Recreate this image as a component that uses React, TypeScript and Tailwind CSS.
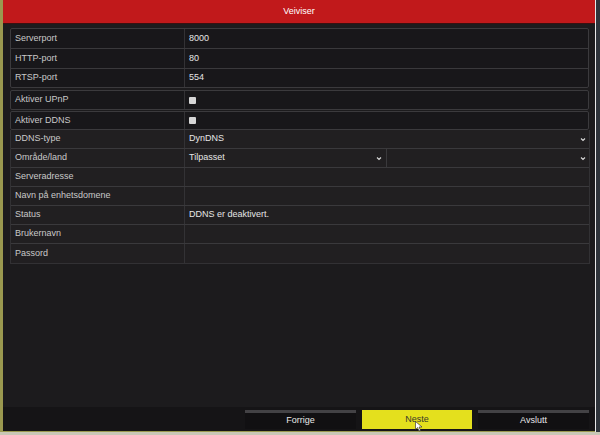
import React from "react";

const font = { fontFamily: '"Liberation Sans", Arial, sans-serif' };

function Chevron() {
  return (
    <svg width="6" height="5" viewBox="0 0 6 5" className="shrink-0">
      <path d="M1 1.5 L3 3.5 L5 1.5" stroke="#d8d8d8" strokeWidth="1.1" fill="none" />
    </svg>
  );
}

function Check() {
  return <div className="w-[7px] h-[7px] bg-[#d6d6d6] rounded-[1px]" />;
}

function Row({
  label,
  children,
  h = "h-[20px]",
  last = false,
}: {
  label: string;
  children?: React.ReactNode;
  h?: string;
  last?: boolean;
}) {
  return (
    <div className={`flex ${h} ${last ? "" : "border-b border-[#3a393c]"}`}>
      <div className="w-[174px] shrink-0 border-r border-[#333235] pl-[4px] flex items-center text-[#c9c9c9]">
        {label}
      </div>
      <div className="flex-1 flex items-center pl-[4px] pr-[3px] text-[#e6e6e6]">{children}</div>
    </div>
  );
}

function Select({ value }: { value?: string }) {
  return (
    <div className="flex-1 flex items-center justify-between h-full">
      <span>{value}</span>
      <Chevron />
    </div>
  );
}

export default function App() {
  const ddnsRows = [
    "Serveradresse",
    "Navn på enhetsdomene",
    "Status",
    "Brukernavn",
    "Passord",
  ];

  return (
    <div className="w-[600px] h-[435px] bg-[#b1af97] flex flex-col overflow-hidden text-[9px]" style={font}>
      <div className="flex h-[432px]">
        <div className="w-[595px] h-full bg-[#1c1b1d] border-l-[3px] border-b border-[#9a984f] flex flex-col">
          <div className="h-[24px] bg-[#c1191b] flex items-center justify-center text-white text-[9px] border-b border-[#3a1010]">
            Veiviser
          </div>

          <div className="flex-1 flex flex-col pl-[7px] pr-[6px] pt-[4px]">
            <div className="border border-[#3b3a3d] rounded-[2px] bg-[#18171a]">
              <Row label="Serverport">8000</Row>
              <Row label="HTTP-port">80</Row>
              <Row label="RTSP-port" h="h-[18px]" last>
                554
              </Row>
            </div>

            <div className="mt-[2px] border border-[#3b3a3d] rounded-[2px] bg-[#18171a]">
              <Row label="Aktiver UPnP" h="h-[18px]" last>
                <Check />
              </Row>
            </div>
            <div className="mt-[1px] border border-[#3b3a3d] rounded-[2px] bg-[#18171a]">
              <Row label="Aktiver DDNS" h="h-[17px]" last>
                <Check />
              </Row>
            </div>

            <div className="border border-t-0 border-[#323134] bg-[#211f21] mr-[-1px]">
              <Row label="DDNS-type" h="h-[19px]">
                <Select value="DynDNS" />
              </Row>
              <div className="flex h-[19px] border-b border-[#3a393c]">
                <div className="w-[174px] shrink-0 border-r border-[#333235] pl-[4px] flex items-center text-[#c9c9c9]">
                  Område/land
                </div>
                <div className="w-[202px] flex items-center pl-[4px] pr-[4px] border-r border-[#3a393c] text-[#e6e6e6]">
                  <Select value="Tilpasset" />
                </div>
                <div className="flex-1 flex items-center pl-[4px] pr-[3px]">
                  <Select />
                </div>
              </div>
              {ddnsRows.map((label, i) => (
                <Row key={label} label={label} h="h-[19px]" last={i === ddnsRows.length - 1}>
                  {label === "Status" ? "DDNS er deaktivert." : null}
                </Row>
              ))}
            </div>
          </div>

          <div className="relative h-[24px] bg-[#151416] flex items-start justify-end gap-[6px] pt-[3px] pr-[6px]">
            <div className="w-[111px] h-[19px] bg-[#111012] border-t-[3px] border-[#434245] flex items-center justify-center text-[#e8e8e8]">
              Forrige
            </div>
            <div className="w-[110px] h-[19px] bg-[#e4e01d] flex items-center justify-center text-[#3a3a2a]">
              Neste
            </div>
            <div className="w-[111px] h-[19px] bg-[#111012] border-t-[3px] border-[#434245] flex items-center justify-center text-[#e8e8e8]">
              Avslutt
            </div>
            <svg className="absolute left-[412px] top-[14px]" width="8" height="11" viewBox="0 0 8 11">
              <path d="M0.5 0.5 L0.5 8.5 L2.5 6.5 L4 10 L5.5 9.3 L4 6 L7 6 Z" fill="#ffffff" stroke="#222" strokeWidth="0.6" />
            </svg>
          </div>
        </div>
        <div className="w-[1px] h-full bg-[#e8e8e8]" />
        <div className="flex-1 h-full bg-[#2f343b]" />
      </div>
      <div className="h-[3px] bg-[#c9c7b6]" />
    </div>
  );
}
